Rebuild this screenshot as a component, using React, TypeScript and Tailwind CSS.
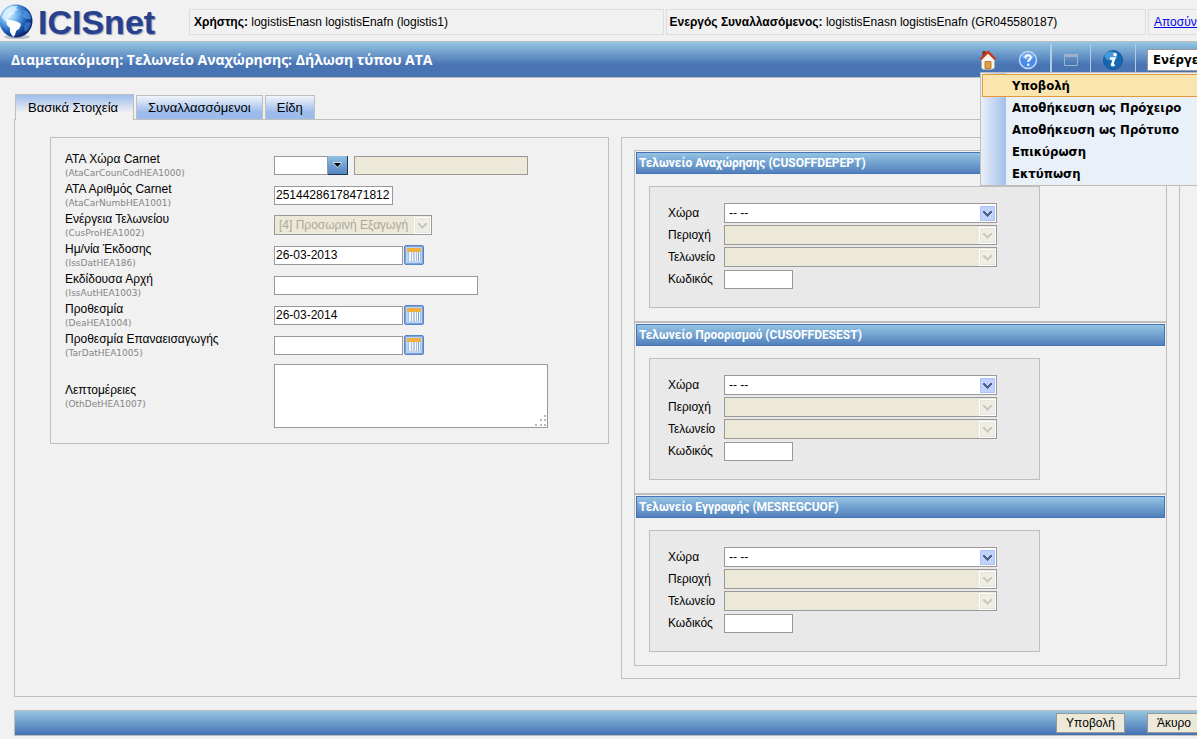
import React from 'react';

interface LabelProps {
    id: string;
    text: string;
    code: string;
}

const FieldLabel: React.FC<LabelProps> = ({ id, text, code }) => (
    <label htmlFor={id} className="w-[209px] shrink-0">
        <span className="block text-[12px] leading-4">{text}</span>
        <span className="block font-['DejaVu_Sans'] text-[9px] leading-3 text-[#858585]">{code}</span>
    </label>
);

const inputStyle = 'h-[19px] border border-[#999] bg-white pl-px text-[12px] outline-none';

const SelectArrow: React.FC<{ disabled?: boolean }> = ({ disabled }) => (
    <svg
        viewBox="0 0 17 17"
        shapeRendering="crispEdges"
        className="pointer-events-none col-start-1 row-start-1 mr-px h-[17px] w-[17px] justify-self-end"
    >
        <rect width="17" height="17" fill="#fff" />
        <rect x="1" y="1" width="15" height="15" rx="1" fill={disabled ? '#e6e6dd' : '#a9c3f8'} />
        <rect x="2" y="2" width="13" height="13" fill={disabled ? '#eeeee6' : '#c1d3fc'} />
        <path
            d="M4 6h2v1h1v1h1v1h1v-1h1v-1h1v-1h2v2h-1v1h-1v1h-1v1h-1v1h-1v-1h-1v-1h-1v-1h-1v-1h-1z"
            fill={disabled ? '#c9c9c0' : '#4d6185'}
        />
    </svg>
);

interface SelectProps {
    id: string;
    value: string;
    disabled?: boolean;
    width: string;
}

const SelectBox: React.FC<SelectProps> = ({ id, value, disabled, width }) => (
    <div className={`grid items-center ${width}`}>
        <select
            id={id}
            disabled={disabled}
            className="col-start-1 row-start-1 h-5 w-full appearance-none border border-[#999] bg-white pl-1 text-[12px] leading-4 text-black opacity-100 disabled:bg-[#ece9d8] disabled:text-[#aca899]"
        >
            <option>{value}</option>
        </select>
        <SelectArrow disabled={disabled} />
    </div>
);

const CalendarButton: React.FC = () => (
    <button type="button" aria-label="Ημερολόγιο" className="ml-px h-5 w-5 shrink-0">
        <svg viewBox="0 0 20 20" className="h-5 w-5">
            <rect x="0.5" y="0.5" width="19" height="19" rx="1.5" fill="#bcd3f3" stroke="#5a84c6" />
            <rect x="1.5" y="1.5" width="17" height="17" fill="none" stroke="#7ba2dc" />
            <rect x="4" y="7" width="13" height="9" fill="#f4f8fd" />
            <rect x="3" y="3" width="14" height="4" fill="#f0b040" />
            <path d="M4.5 7v9M7.5 7v9M12.5 7v9M16.5 7v9" stroke="#a9bfe0" />
            <path d="M10 7v9M14.500 7v9" stroke="#7f9fd0" />
        </svg>
    </button>
);

const OfficeSection: React.FC<{ title: string; prefix: string }> = ({ title, prefix }) => (
    <section className="border border-[#bebebe] p-px">
        <h2 className="h-[22px] border border-[#4672b6] bg-linear-to-b from-[#94c4e2] to-[#5280bd] pl-[2px] font-['Roboto'] text-[12px] leading-5 font-bold text-white">
            {title}
        </h2>
        <div className="mt-3 mr-[125px] mb-3 ml-[13px] border border-[#bebebe] bg-[#e9e9e9] pt-[15px] pb-[17px] pl-[18px]">
            {['Χώρα', 'Περιοχή', 'Τελωνείο'].map((name, i) => (
                <div key={name} className="flex h-[22px] items-center">
                    <label htmlFor={`${prefix}-${i}`} className="w-14 shrink-0 text-[12px]">{name}</label>
                    <SelectBox id={`${prefix}-${i}`} value={i === 0 ? '-- --' : ''} disabled={i > 0} width="w-[273px]" />
                </div>
            ))}
            <div className="flex h-[22px] items-center">
                <label htmlFor={`${prefix}-code`} className="w-14 shrink-0 text-[12px]">Κωδικός</label>
                <input id={`${prefix}-code`} className={`${inputStyle} w-[69px]`} />
            </div>
        </div>
    </section>
);

const Globe: React.FC = () => (
    <svg viewBox="0 0 34 36" className="h-9 w-[34px] shrink-0">
        <defs>
            <radialGradient id="globe" cx="0.3" cy="0.3" r="0.75">
                <stop offset="0" stopColor="#d8efff" />
                <stop offset="0.35" stopColor="#6db4ee" />
                <stop offset="0.7" stopColor="#1c5cb8" />
                <stop offset="1" stopColor="#0a2468" />
            </radialGradient>
        </defs>
        <ellipse cx="17" cy="33" rx="13" ry="2" fill="#b9bfcc" />
        <circle cx="16" cy="17" r="16.5" fill="url(#globe)" />
        <path d="M2 12 5 6l6-4 7 0-2 2 2 2-3 1-1 3-3 1-1 3-3 1 2 3-4-1-3-3z" fill="#e4f4ff" opacity="0.75" />
        <path d="M6 15l5 1 4 1 5 2 1 2-2 4-3 2-1 4-2 2-3-5 0-4-3-3z" fill="#fff" />
        <path d="M23 6l4 1 3 4 1 4-4 0-3-1-2-3 2-1z" fill="#5a9ae0" opacity="0.7" />
        <path d="M25 19l5-1 1 2-3 6-3 2-1-5z" fill="#3f7fd0" opacity="0.7" />
    </svg>
);

const HomeIcon: React.FC = () => (
    <svg viewBox="0 0 20 20" className="h-5 w-5">
        <rect x="4.500" y="1" width="3" height="6" fill="#8c2a16" />
        <path d="M3.500 9l6.500-6 6.500 6v9l-3 1.500H5L3.500 18z" fill="#f7f5f2" stroke="#b9a898" strokeWidth="0.6" />
        <path d="M2.500 9.500 10 1.800l7.500 7.700" fill="none" stroke="#c13e20" strokeWidth="2.500" strokeLinejoin="round" />
        <path d="M7 18.500v-7h6v7z" fill="#e0a040" stroke="#a8681e" strokeWidth="0.8" />
    </svg>
);

const HelpIcon: React.FC = () => (
    <svg viewBox="0 0 20 20" className="h-5 w-5">
        <circle cx="10" cy="10" r="8.500" fill="#4a8ae8" stroke="#c9dcf6" strokeWidth="1.400" />
        <ellipse cx="10" cy="6" rx="6.500" ry="4" fill="#8fbaf5" opacity="0.7" />
        <path d="M7.300 8c0-3.600 5.600-3.600 5.600-.4 0 2-2.700 2.200-2.700 4.400" fill="none" stroke="#fff" strokeWidth="2" />
        <circle cx="10.200" cy="14.700" r="1.200" fill="#fff" />
    </svg>
);

const InfoIcon: React.FC = () => (
    <svg viewBox="0 0 20 20" className="h-5 w-5">
        <circle cx="10" cy="10" r="9.500" fill="#1467b0" stroke="#0e4f92" strokeWidth="0.8" />
        <ellipse cx="8" cy="6" rx="6.500" ry="4.500" fill="#4fa8e0" opacity="0.8" />
        <circle cx="12" cy="4.600" r="1.800" fill="#fff" />
        <path d="M7 8.500h4.300L9 14.500q-.4 1.600 2.600.2" fill="none" stroke="#fff" strokeWidth="2.400" />
    </svg>
);

const menuItems = ['Υποβολή', 'Αποθήκευση ως Πρόχειρο', 'Αποθήκευση ως Πρότυπο', 'Επικύρωση', 'Εκτύπωση'];

const ActionMenu: React.FC = () => (
    <ul className="absolute top-[30px] right-0 z-10 w-[217px] border-y border-l border-[#bebebe] bg-[#e9f0f8] bg-linear-to-r from-[#e9f0f8] to-[#a3bfeb] bg-[length:25px_100%] bg-no-repeat pt-px font-['DejaVu_Sans_Condensed','DejaVu_Sans'] text-[13px] font-bold">
        {menuItems.map((item, i) => (
            <li key={item}>
                <button
                    type="button"
                    className={
                        i === 0
                            ? 'ml-px block h-[23px] w-full border-y border-l border-[#e8983c] bg-[#fbe5ae] pl-[29px] text-left'
                            : 'block h-[22px] w-full pl-[31px] text-left'
                    }
                >
                    {item}
                </button>
            </li>
        ))}
    </ul>
);

const App: React.FC = () => {
    return (
        <div className="min-h-screen overflow-hidden bg-[#f1f1f1] pb-[3px] font-['Liberation_Sans',Arial,sans-serif] text-[12px] leading-4 text-black">
            <header className="flex h-[41px] items-start gap-[2px] whitespace-nowrap">
                <div className="flex w-[187px] shrink-0 items-start pt-1">
                    <Globe />
                    <span className="pl-1 text-[34px] leading-9 font-bold text-[#27418f] [text-shadow:1px_1px_1px_#8a93ad]">ICISnet</span>
                </div>
                <div className="mt-[9px] h-[26px] flex-[474] border border-[#ddd] pl-1 leading-6">
                    <b>Χρήστης:</b> logistisEnasn logistisEnafn (logistis1)
                </div>
                <div className="mt-[9px] h-[26px] flex-[481] border border-[#ddd] pl-[3px] leading-6">
                    <b>Ενεργός Συναλλασόμενος:</b> logistisEnasn logistisEnafn (GR045580187)
                </div>
                <div className="mt-[9px] h-[26px] w-[49px] shrink-0 overflow-hidden border-y border-l border-[#ddd] pl-[5px] leading-6">
                    <a href="#logout" className="text-[#0000ee] underline">Αποσύνδεση</a>
                </div>
            </header>

            <div className="relative flex h-[37px] items-center border-y border-[#bebebe] bg-linear-to-b from-[#96c6e3] to-[#4874b4] to-65% pl-[11px]">
                <h1 className="flex-1 font-['Open_Sans'] text-[14px] font-bold text-white">
                    Διαμετακόμιση: Τελωνείο Αναχώρησης: Δήλωση τύπου ΑΤΑ
                </h1>
                <div className="flex h-[31px] items-center">
                    <button type="button" aria-label="Αρχική" className="mr-5"><HomeIcon /></button>
                    <button type="button" aria-label="Βοήθεια" className="mr-3"><HelpIcon /></button>
                    <div className="flex h-full items-center border-l-2 border-[#b2cbe8] px-3">
                        <button type="button" aria-label="Παράθυρο">
                            <svg viewBox="0 0 14 14" className="h-[14px] w-[14px]">
                                <path d="M.5 1.500h13v11H.5z" fill="none" stroke="#9db0cc" />
                                <path d="M0 2.500h14" stroke="#9db0cc" strokeWidth="3" />
                            </svg>
                        </button>
                    </div>
                    <div className="flex h-full items-center border-x border-[#b2cbe8] px-3">
                        <button type="button" aria-label="Πληροφορίες"><InfoIcon /></button>
                    </div>
                    <button
                        type="button"
                        className="ml-[11px] h-[22px] w-[50px] overflow-hidden border-y border-l border-[#999] bg-white pl-[5px] text-left font-['DejaVu_Sans_Condensed','DejaVu_Sans'] text-[13px] font-bold whitespace-nowrap"
                    >
                        Ενέργειες
                    </button>
                </div>
                <ActionMenu />
            </div>

            <main className="pl-[14px]">
                <nav className="mt-4 flex h-[25px] items-end gap-[2px] pl-px">
                    <button type="button" className="-mb-px h-[26px] border border-b-0 border-[#bebebe] bg-linear-to-b from-[#9dbcec] to-[#f1f1f1] to-70% pr-[15px] pl-3 text-[13px]">
                        Βασικά Στοιχεία
                    </button>
                    <button type="button" className="h-6 border border-b-0 border-[#bebebe] bg-linear-to-b from-[#f1f4fa] to-[#9dbcec] to-70% px-[11px] text-[13px]">
                        Συναλλασσόμενοι
                    </button>
                    <button type="button" className="h-6 border border-b-0 border-[#bebebe] bg-linear-to-b from-[#f1f4fa] to-[#9dbcec] to-70% px-[11px] text-[13px]">
                        Είδη
                    </button>
                </nav>

                <div className="grid grid-cols-2 items-start gap-3 border-y border-l border-[#bebebe] py-[17px] pr-[17px] pl-[35px]">
                    <form className="border border-[#bebebe] pt-3 pb-[11px] pl-[14px]">
                        <div className="flex h-[30px] items-center">
                            <FieldLabel id="country" text="ΑΤΑ Χώρα Carnet" code="(AtaCarCounCodHEA1000)" />
                            <input id="country" className={`${inputStyle} w-[54px]`} />
                            <button type="button" aria-label="Επιλογή" className="flex h-[19px] w-5 items-center justify-center border-r border-b border-[#1d3557] bg-linear-to-b from-[#8fc0e2] to-[#5584c0]">
                                <svg viewBox="0 0 9 6" className="h-[6px] w-[9px] shrink-0">
                                    <path d="M0 0h9v1L4.500 6 0 1z" fill="#c6d8ec" />
                                    <path d="M1 1h7L4.500 5z" fill="#000" />
                                </svg>
                            </button>
                            <input aria-label="Όνομα χώρας" disabled className="ml-[6px] h-[19px] w-[174px] border border-[#999] bg-[#ece9d8]" />
                        </div>
                        <div className="flex h-[30px] items-center">
                            <FieldLabel id="number" text="ΑΤΑ Αριθμός Carnet" code="(AtaCarNumbHEA1001)" />
                            <input id="number" defaultValue="25144286178471812" className={`${inputStyle} w-[119px]`} />
                        </div>
                        <div className="flex h-[30px] items-center">
                            <FieldLabel id="procedure" text="Ενέργεια Τελωνείου" code="(CusProHEA1002)" />
                            <SelectBox id="procedure" value="[4] Προσωρινή Εξαγωγή" disabled width="w-[158px]" />
                        </div>
                        <div className="flex h-[30px] items-center">
                            <FieldLabel id="issued" text="Ημ/νία Έκδοσης" code="(IssDatHEA186)" />
                            <input id="issued" defaultValue="26-03-2013" className={`${inputStyle} w-[129px]`} />
                            <CalendarButton />
                        </div>
                        <div className="flex h-[30px] items-center">
                            <FieldLabel id="authority" text="Εκδίδουσα Αρχή" code="(IssAutHEA1003)" />
                            <input id="authority" className={`${inputStyle} w-[204px]`} />
                        </div>
                        <div className="flex h-[30px] items-center">
                            <FieldLabel id="deadline" text="Προθεσμία" code="(DeaHEA1004)" />
                            <input id="deadline" defaultValue="26-03-2014" className={`${inputStyle} w-[129px]`} />
                            <CalendarButton />
                        </div>
                        <div className="flex h-[30px] items-center">
                            <FieldLabel id="reimport" text="Προθεσμία Επαναεισαγωγής" code="(TarDatHEA1005)" />
                            <input id="reimport" className={`${inputStyle} w-[129px]`} />
                            <CalendarButton />
                        </div>
                        <div className="flex h-[72px] items-center">
                            <FieldLabel id="details" text="Λεπτομέρειες" code="(OthDetHEA1007)" />
                            <div className="grid w-[274px]">
                                <textarea id="details" className="col-start-1 row-start-1 h-16 resize-none border border-[#999] bg-white" />
                                <svg viewBox="0 0 12 12" className="pointer-events-none col-start-1 row-start-1 mr-px mb-px h-3 w-3 self-end justify-self-end" fill="#b9b9b9">
                                    <path d="M9 0h2v2H9zM5 4h2v2H5zM9 4h2v2H9zM0 9h2v2H0zM5 9h2v2H5zM9 9h2v2H9z" />
                                </svg>
                            </div>
                        </div>
                    </form>

                    <form className="border border-[#bebebe] p-3">
                        <OfficeSection title="Τελωνείο Αναχώρησης (CUSOFFDEPEPT)" prefix="departure" />
                        <OfficeSection title="Τελωνείο Προορισμού (CUSOFFDESEST)" prefix="destination" />
                        <OfficeSection title="Τελωνείο Εγγραφής (MESREGCUOF)" prefix="registry" />
                    </form>
                </div>

                <footer className="mt-[13px] flex h-[26px] items-center justify-end gap-[22px] border-y border-l border-[#bebebe] bg-linear-to-b from-[#96c6e3] to-[#4672b4]">
                    <button type="button" className="h-5 border border-[#999] bg-[#ece9d8] px-[9px] text-[12px]">Υποβολή</button>
                    <button type="button" className="-mr-1 h-5 border border-[#999] bg-[#ece9d8] px-[9px] text-[12px]">Άκυρο</button>
                </footer>
            </main>
        </div>
    );
};
export default App;
